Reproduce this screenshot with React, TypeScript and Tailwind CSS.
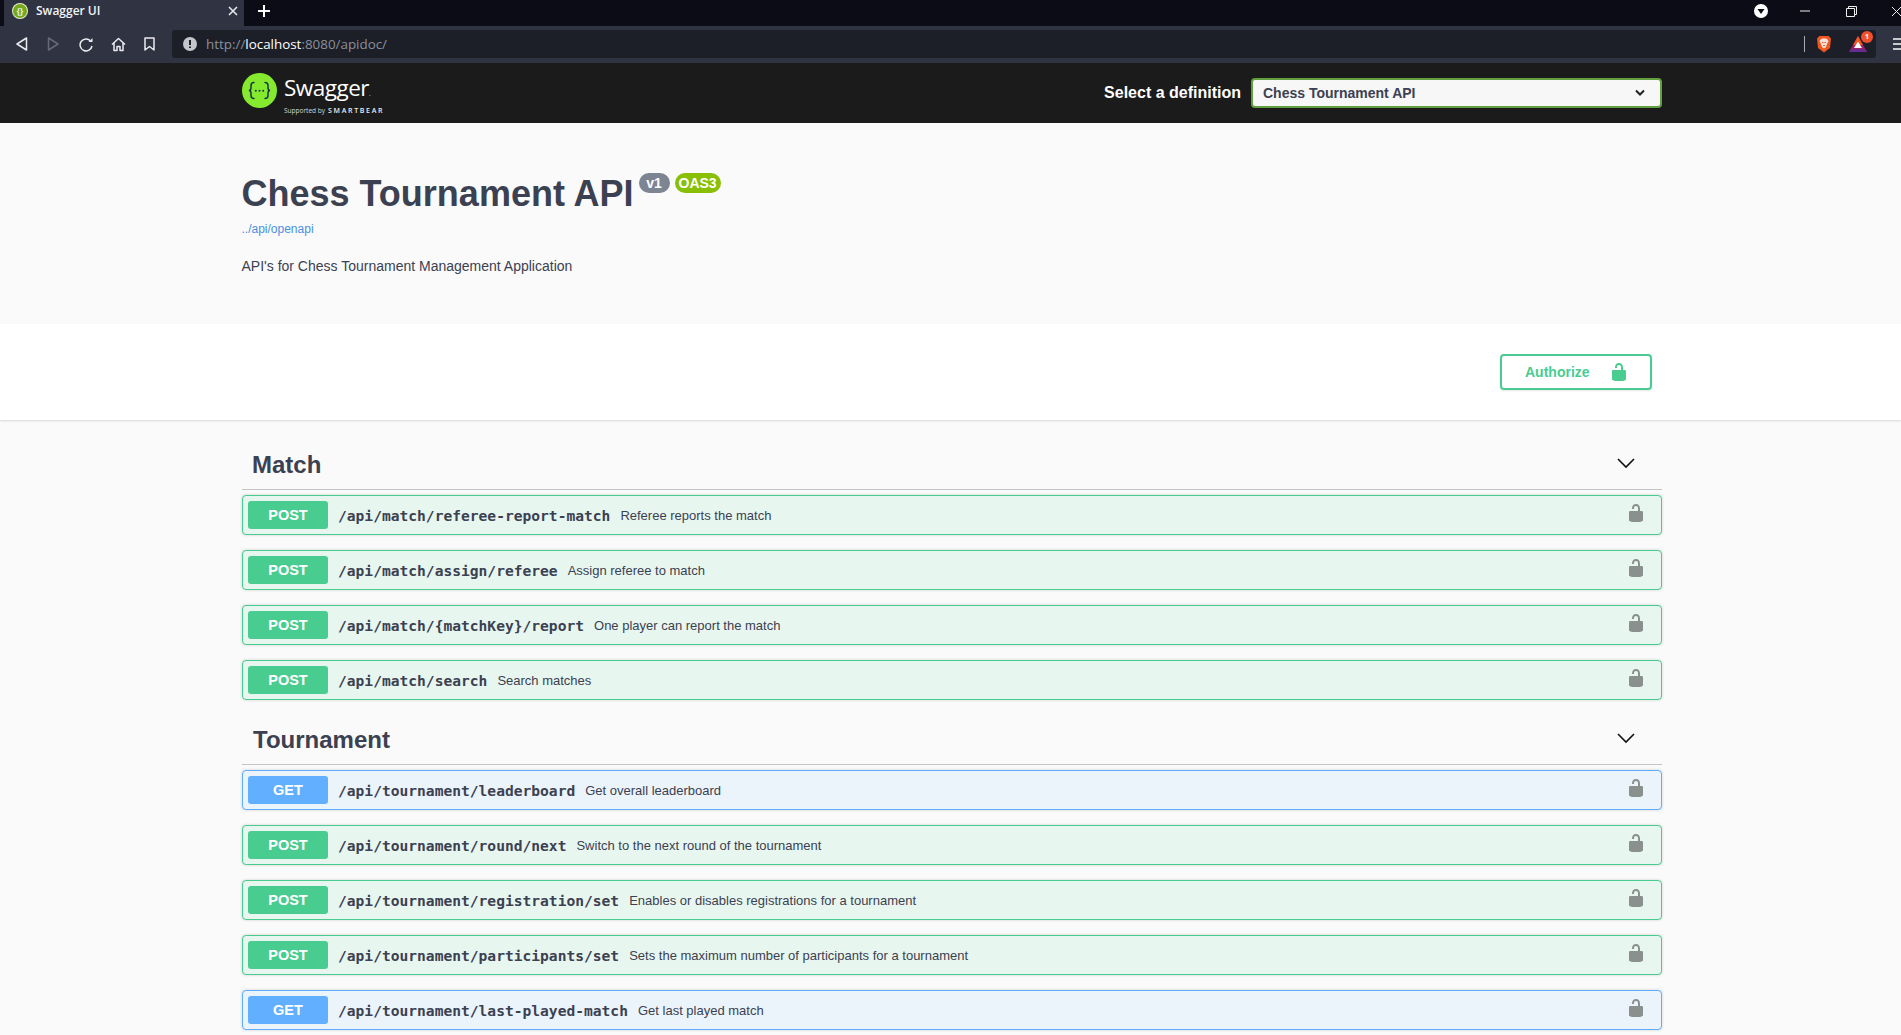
import React from "react";

const Lock = ({ color }: { color: string }) => (
  <svg width="20" height="20" viewBox="0 0 20 20" className="shrink-0" fill={color}>
    <path d="M15.8 8H14V5.6C14 2.703 12.665 1 10 1 7.334 1 6 2.703 6 5.6V6h2v-.801C8 3.754 8.797 3 10 3c1.203 0 2 .754 2 2.199V8H4c-.553 0-1 .646-1 1.199V17c0 .549.428 1.139.951 1.307l1.197.387C5.672 18.861 6.55 19 7.1 19h5.8c.549 0 1.428-.139 1.951-.307l1.196-.387c.524-.167.953-.757.953-1.306V9.199C17 8.646 16.352 8 15.8 8z" />
  </svg>
);

const Row = ({ m, path, desc }: { m: "POST" | "GET"; path: string; desc: string }) => {
  const post = m === "POST";
  return (
    <div
      className={`h-10 mb-[15px] flex items-center rounded border pl-[5px] pr-[15px] shadow-[0_0_3px_rgba(0,0,0,0.19)] ${
        post ? "bg-[#e8f6f0] border-[#49cc90]" : "bg-[#ebf3fb] border-[#61affe]"
      }`}
    >
      <div
        className={`w-[80px] h-7 rounded-[3px] flex items-center justify-center text-white text-[14.5px] font-bold pt-[1px] ${
          post ? "bg-[#49cc90]" : "bg-[#61affe]"
        }`}
      >
        {m}
      </div>
      <div className="ml-[10px] text-[14.6px] font-bold text-[#3b4151] font-['DejaVu_Sans_Mono',monospace] pt-[1px]">{path}</div>
      <div className="ml-[10px] text-[13px] text-[#3b4151] pt-[1px]">{desc}</div>
      <div className="ml-auto -mt-[4px]">
        <Lock color="#8a908d" />
      </div>
    </div>
  );
};

const Section = ({ name, offset, children }: { name: string; offset: string; children: React.ReactNode }) => (
  <div>
    <div className="h-[50px] flex items-center justify-between border-b border-[#c3c5c9] mb-[5px]">
      <h3 className={`text-[24px] font-bold text-[#3b4151] ${offset}`}>{name}</h3>
      <svg width="20" height="20" viewBox="0 0 20 20" className="mr-[26px] -mt-[3px]" fill="none" stroke="#111" strokeWidth="1.6">
        <path d="M2 6l8 8 8-8" />
      </svg>
    </div>
    {children}
  </div>
);

const BrowserChrome = () => (
  <div className="font-['Open_Sans',sans-serif]">
    <div className="h-[26px] bg-[#0b0c15] flex items-stretch pl-[4px] text-white">
      <div className="w-[240px] bg-[#2f3342] flex items-center pl-[8px] pr-[5px] pb-[4px] relative">
        <div className="w-4 h-4 rounded-full bg-[#78a81c] border border-white/80 flex items-center justify-center text-[8px] leading-none font-bold text-white/90">{"{}"}</div>
        <span className="ml-[8px] text-[12px] font-semibold text-[#f2f4f8]">Swagger UI</span>
        <svg width="10" height="10" viewBox="0 0 10 10" className="ml-auto mr-[1px]" stroke="#e8e8ec" strokeWidth="1.6">
          <path d="M1 1l8 8M9 1l-8 8" />
        </svg>
      </div>
      <div className="flex items-center pb-[4px]">
        <svg width="12" height="12" viewBox="0 0 12 12" className="ml-[14px]" stroke="#fff" strokeWidth="2">
          <path d="M6 0v12M0 6h12" />
        </svg>
      </div>
      <div className="ml-auto flex items-center pb-[4px]">
        <svg width="14" height="14" viewBox="0 0 14 14" className="mr-[32px]">
          <circle cx="7" cy="7" r="7" fill="#fff" />
          <path d="M3.500 5h7L7 10z" fill="#0b0c15" />
        </svg>
        <svg width="10" height="2" viewBox="0 0 10 2" className="mr-[36px]"><path d="M0 1h10" stroke="#eee" strokeWidth="1" /></svg>
        <svg width="11" height="11" viewBox="0 0 11 11" className="mr-[35px]" fill="none" stroke="#eee" strokeWidth="1">
          <path d="M.5 2.500h8v8h-8zM2.500 2.500v-2h8v8h-2" />
        </svg>
        <svg width="9" height="11" viewBox="0 0 9 11" stroke="#eee" strokeWidth="1"><path d="M0 1l9 9M9 1l-9 9" /></svg>
      </div>
    </div>
    <div className="h-[37px] bg-[#2f3342] flex items-center pb-[1px]">
      <div className="flex items-center w-[172px] shrink-0 pl-[16px] gap-[17px]">
        <svg width="12" height="14" viewBox="0 0 12 14" fill="none" stroke="#ececf0" strokeWidth="1.5" strokeLinejoin="round"><path d="M10.500 1v12L1 7z" /></svg>
        <svg width="12" height="14" viewBox="0 0 12 14" fill="none" stroke="#666a78" strokeWidth="1.5" strokeLinejoin="round" className="ml-[2px]"><path d="M1.500 1v12L11 7z" /></svg>
        <svg width="15" height="15" viewBox="0 0 15 15" fill="none" stroke="#ececf0" strokeWidth="1.5" className="ml-[3px]"><path d="M13 9a6 6 0 1 1-1.600-5.300" /><path d="M13.500 1v4h-4z" fill="#ececf0" stroke="none" /></svg>
        <svg width="15" height="15" viewBox="0 0 15 15" fill="none" stroke="#ececf0" strokeWidth="1.5" strokeLinejoin="round"><path d="M1 7.500L7.500 1.500 14 7.500M3 6v7.500h3V9.500h3v4h3V6" /></svg>
        <svg width="11" height="14" viewBox="0 0 11 14" fill="none" stroke="#ececf0" strokeWidth="1.5" strokeLinejoin="round" className="ml-[1px]"><path d="M1 1h9v12l-4.500-3.500L1 13z" /></svg>
      </div>
      <div className="flex-1 h-[28px] bg-[#1c1f28] rounded-[3px] mr-[17px] flex items-center relative">
        <svg width="14" height="14" viewBox="0 0 14 14" className="ml-[11px]"><circle cx="7" cy="7" r="7" fill="#c4c6cc" /><path d="M7 3v5M7 9.500v1.500" stroke="#1c1f28" strokeWidth="2" /></svg>
        <span className="ml-[9px] text-[13.4px] text-[#8b8f9b]">http://<span className="text-white">localhost</span>:8080/apidoc/</span>
        <div className="ml-auto w-px h-[16px] bg-[#a9abb2] mr-[11px]" />
        <svg width="16" height="18" viewBox="0 0 16 18" className="mr-[17px]">
          <path d="M3.500 1h9L15 3.500l-1 9.500-6 4.500L2 13 1 3.500z" fill="#f1561f" />
          <path d="M4.500 4.500L6 3.500h4l1.500 1 1 1.500L11 9l-1 3-2 1.500L6 12 5 9 3.500 6z" fill="#f6e4dc" />
          <path d="M6 7h1.500v1H6zM8.500 7H10v1H8.500zM7 10h2v1H7z" fill="#f1561f" />
        </svg>
        <div className="relative mr-[9px] w-[18px] h-[16px]">
          <svg width="18" height="16" viewBox="0 0 18 16" className="absolute left-0 top-0">
            <path d="M9 0l9 16H0z" fill="#9e1f63" />
            <path d="M9 0l5 9H4z" fill="#f1561f" />
            <path d="M9 5.500l4 6.500H5z" fill="#fff" />
            <path d="M0 16l3.500-3h11l3.500 3z" fill="#662d91" />
          </svg>
          <div className="absolute -right-[6px] -top-[5px] w-[12px] h-[12px] rounded-full bg-[#f1502c] text-white text-[7px] leading-[12px] text-center font-bold">1</div>
        </div>
      </div>
      <div className="w-[8px] h-[12px] flex flex-col justify-between shrink-0">
        <div className="h-[2px] bg-[#c8c9cf]" />
        <div className="h-[2px] bg-[#c8c9cf]" />
        <div className="h-[2px] bg-[#c8c9cf]" />
      </div>
    </div>
  </div>
);

const TopBar = () => (
  <div className="h-[60px] bg-[#1b1b1b]">
    <div className="w-[1420px] ml-[242px] h-full flex items-center">
      <svg width="35" height="35" viewBox="0 0 35 35" className="-mt-[6px]">
        <circle cx="17.500" cy="17.500" r="17.500" fill="#85ea2d" />
        <g fill="none" stroke="#173647" strokeWidth="1.500" strokeLinecap="round">
          <path d="M12 9.500c-2.500 0-3 1.200-3 3v2.500c0 1.500-.8 2.300-2 2.500 1.200.2 2 1 2 2.500v2.500c0 1.800.5 3 3 3" />
          <path d="M23 9.500c2.500 0 3 1.200 3 3v2.500c0 1.500.8 2.300 2 2.500-1.200.2-2 1-2 2.500v2.500c0 1.800-.5 3-3 3" />
        </g>
        <circle cx="13.800" cy="17.800" r="1" fill="#173647" />
        <circle cx="17.500" cy="17.800" r="1" fill="#173647" />
        <circle cx="21.200" cy="17.800" r="1" fill="#173647" />
      </svg>
      <div className="ml-[7px] text-white flex flex-col font-['Open_Sans',sans-serif] mt-[3px]">
        <span className="text-[22.500px] leading-[26px] font-normal tracking-[-0.5px]">Swagger<span className="text-[6px]">.</span></span>
        <span className="text-[6.500px] leading-[9px] -mt-[1px] text-[#d8d8d8] flex items-baseline">Supported by<span className="ml-[3px] font-semibold text-[7px] tracking-[1.700px] text-[#eeeeee]">SMARTBEAR</span></span>
      </div>
      <div className="ml-auto flex items-center">
        <span className="text-white text-[16px] font-bold mr-[10px]">Select a definition</span>
        <div className="w-[411px] h-[30px] bg-[#f7f7f7] border-2 border-[#62a03f] rounded flex items-center pl-[10px] pr-[14px] text-[14px] font-bold text-[#3b4151]">
          <span>Chess Tournament API</span>
          <svg width="12" height="8" viewBox="0 0 12 8" className="ml-auto" fill="none" stroke="#222" strokeWidth="2"><path d="M2 1.500l4 4 4-4" /></svg>
        </div>
      </div>
    </div>
  </div>
);

export default function App() {
  return (
    <div className="h-screen overflow-hidden bg-[#fafafa] font-['Liberation_Sans',Arial,sans-serif]">
      <BrowserChrome />
      <TopBar />
      <div className="w-[1420px] ml-[241px] h-[201px] pt-[51px] pl-[0.5px]">
        <div className="flex items-start h-[40px]">
          <h2 className="text-[36px] leading-[40px] font-bold text-[#3b4151]">Chess Tournament API</h2>
          <span className="ml-[5px] -mt-[1px] h-5 w-[31px] rounded-[10px] bg-[#7d8492] text-white text-[14px] font-bold flex items-center justify-center">v1</span>
          <span className="ml-[5px] -mt-[1px] h-5 w-[46px] rounded-[10px] bg-[#89bf04] text-white text-[14px] font-bold flex items-center justify-center">OAS3</span>
        </div>
        <a className="block mt-[8px] text-[12px] leading-[14px] text-[#4990e2]">../api/openapi</a>
        <p className="mt-[22px] text-[14px] leading-[16px] text-[#3b4151]">API's for Chess Tournament Management Application</p>
      </div>
      <div className="h-[96px] bg-white shadow-[0_1px_2px_rgba(0,0,0,0.15)] relative">
        <div className="w-[1420px] ml-[241px] h-full flex items-center justify-end">
          <div className="mr-[9px] w-[152px] h-[36px] border-2 border-[#49cc90] rounded flex items-center pl-[23px] text-[14px] font-bold text-[#49cc90] shadow-[0_1px_2px_rgba(0,0,0,0.1)]">
            <span>Authorize</span>
            <span className="ml-[19px]"><Lock color="#49cc90" /></span>
          </div>
        </div>
      </div>
      <div className="w-[1420px] ml-[242px] pt-[20px]">
        <Section name="Match" offset="ml-[10px]">
          <Row m="POST" path="/api/match/referee-report-match" desc="Referee reports the match" />
          <Row m="POST" path="/api/match/assign/referee" desc="Assign referee to match" />
          <Row m="POST" path="/api/match/{matchKey}/report" desc="One player can report the match" />
          <Row m="POST" path="/api/match/search" desc="Search matches" />
        </Section>
        <Section name="Tournament" offset="ml-[11px]">
          <Row m="GET" path="/api/tournament/leaderboard" desc="Get overall leaderboard" />
          <Row m="POST" path="/api/tournament/round/next" desc="Switch to the next round of the tournament" />
          <Row m="POST" path="/api/tournament/registration/set" desc="Enables or disables registrations for a tournament" />
          <Row m="POST" path="/api/tournament/participants/set" desc="Sets the maximum number of participants for a tournament" />
          <Row m="GET" path="/api/tournament/last-played-match" desc="Get last played match" />
        </Section>
      </div>
    </div>
  );
}
